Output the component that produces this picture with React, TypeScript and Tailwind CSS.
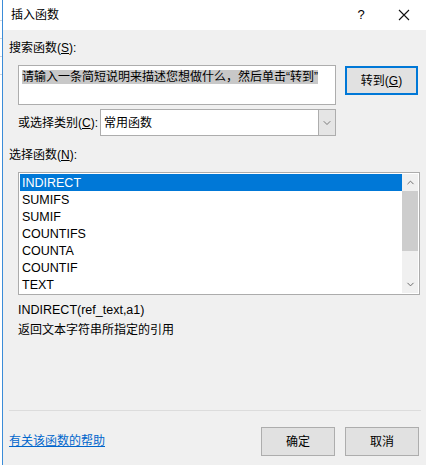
import { ChevronDown, ChevronUp } from "lucide-react";

const functions = ["INDIRECT", "SUMIFS", "SUMIF", "COUNTIFS", "COUNTA", "COUNTIF", "TEXT"];

const ui = { fontFamily: '"Liberation Sans", "Noto Sans CJK SC", sans-serif' };

export default function App() {
  return (
    <div className="flex h-[465px] w-[426px] overflow-hidden bg-white text-[12px] text-black" style={ui}>
      {/* sliver of the sheet behind the dialog */}
      <div className="flex w-[2px] flex-col gap-[17px] bg-white pt-[20px]">
        <div className="h-px bg-gray-300" />
        <div className="h-px bg-gray-300" />
        <div className="h-px bg-gray-300" />
        <div className="h-px bg-gray-300" />
      </div>
      <div className="flex flex-1 flex-col border-l border-[#3b8cd8]">
        <header className="flex h-[30px] items-center bg-white pl-[8px]">
          <span className="text-[12px]">插入函数</span>
          <span className="ml-auto w-[16px] text-center text-[13px]">?</span>
          <button className="ml-[21px] mr-[8px] flex h-[30px] w-[28px] items-center justify-center">
            <svg width="12" height="12" viewBox="0 0 12 12" stroke="#111" strokeWidth="1.1">
              <path d="M1 1L11 11M11 1L1 11" />
            </svg>
          </button>
        </header>

        <main className="flex flex-1 flex-col bg-[#f0f0f0] pl-[6px] pr-[5px]">
          <div className="mt-[11px] leading-[14px]">
            搜索函数(<span className="underline">S</span>):
          </div>

          <div className="mt-[10px] flex items-start gap-[9px] pl-[9px]">
            <div className="h-[40px] w-[318px] border border-[#adadad] bg-white px-[3px] pt-[2px]">
              <span className="bg-[#c8c8c8] leading-[17px]">请输入一条简短说明来描述您想做什么，然后单击“转到”</span>
            </div>
            <button className="mt-px h-[29px] w-[73px] border-2 border-[#0078d7] bg-[#e1e1e1]">
              转到(<span className="underline">G</span>)
            </button>
          </div>

          <div className="mt-[4px] flex items-center pl-[9px]">
            <span className="w-[82px]">
              或选择类别(<span className="underline">C</span>):
            </span>
            <div className="flex h-[27px] w-[236px] border border-[#adadad] bg-white">
              <span className="flex flex-1 items-center pl-[3px]">常用函数</span>
              <span className="flex w-[17px] items-center justify-center border-l border-[#adadad] bg-[#e5e5e5]">
                <ChevronDown size={12} strokeWidth={1.5} color="#555" />
              </span>
            </div>
          </div>

          <div className="mt-[12px] leading-[14px]">
            选择函数(<span className="underline">N</span>):
          </div>

          <div className="ml-[9px] mt-[10px] flex h-[123px] w-[402px] border border-[#acacac] bg-white p-px">
            <ul className="flex-1 text-[12.5px]">
              {functions.map((f, i) => (
                <li
                  key={f}
                  className={
                    i === 0
                      ? "h-[17px] bg-[#0078d7] pl-[2px] leading-[18px] text-white"
                      : "h-[17px] pl-[2px] leading-[19px]"
                  }
                >
                  {f}
                </li>
              ))}
            </ul>
            <div className="flex w-[16px] flex-col bg-[#f0f0f0]">
              <span className="flex h-[17px] items-center justify-center">
                <ChevronUp size={11} strokeWidth={2} color="#606060" />
              </span>
              <div className="h-[60px] bg-[#cdcdcd]" />
              <span className="mt-auto flex h-[17px] items-center justify-center">
                <ChevronDown size={11} strokeWidth={2} color="#606060" />
              </span>
            </div>
          </div>

          <div className="mt-[8px] pl-[9px] text-[12.5px] leading-[14px]">INDIRECT(ref_text,a1)</div>
          <div className="mt-[6px] pl-[9px] leading-[14px]">返回文本字符串所指定的引用</div>

          <div className="mt-[73px] h-px bg-[#dcdcdc]" />

          <div className="mt-[16px] flex items-center">
            <a className="-mt-[2px] text-[#0066cc] underline" href="#">
              有关该函数的帮助
            </a>
            <button className="ml-auto h-[29px] w-[74px] border border-[#adadad] bg-[#e1e1e1]">确定</button>
            <button className="ml-[10px] mr-[2px] h-[29px] w-[74px] border border-[#adadad] bg-[#e1e1e1]">取消</button>
          </div>
        </main>
      </div>
    </div>
  );
}
